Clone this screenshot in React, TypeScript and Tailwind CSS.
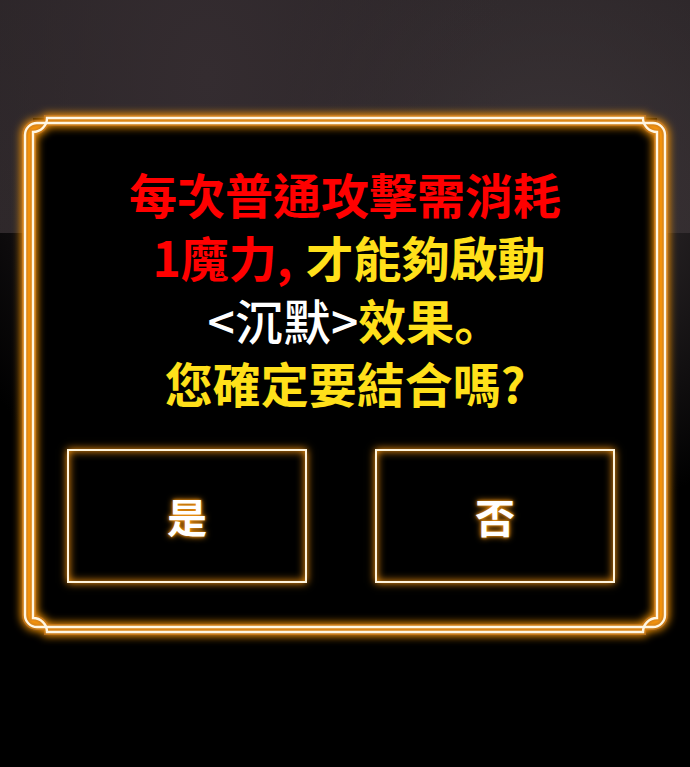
import React from "react";

const FONT = "font-['Noto_Sans_CJK_TC','Noto_Sans_CJK_SC',sans-serif]";

// outer line: concave corners, inner line: rounded corners, offset by the frame's origin (24,117)
const LINE_A =
  "M23,1 H619 A14,14 0 0,0 633,15 V501 A14,14 0 0,0 619,515 H23 A14,14 0 0,0 9,501 V15 A14,14 0 0,0 23,1 Z";
const LINE_B =
  "M13,6 H629 A12,12 0 0,1 641,18 V498 A12,12 0 0,1 629,510 H13 A12,12 0 0,1 1,498 V18 A12,12 0 0,1 13,6 Z";

function FrameLines() {
  return (
    <svg
      className="absolute inset-0 overflow-visible pointer-events-none"
      width={642}
      height={516}
      viewBox="0 0 642 516"
    >
      <defs>
        <filter id="glow" x="-10%" y="-10%" width="120%" height="120%">
          <feGaussianBlur stdDeviation="4.5" />
        </filter>
      </defs>
      <g filter="url(#glow)" fill="none" stroke="#ff9a10" strokeWidth={8}>
        <path d={LINE_A} />
        <path d={LINE_B} />
      </g>
      <g fill="none" stroke="#d9861f" strokeWidth={6} opacity={0.6}>
        <path d={LINE_A} />
        <path d={LINE_B} />
      </g>
      <g fill="none" stroke="#fff6e2" strokeWidth={2.4}>
        <path d={LINE_A} />
        <path d={LINE_B} />
      </g>
    </svg>
  );
}

function ChoiceButton({ label }: { label: string }) {
  return (
    <button className="flex h-[134px] w-[240px] items-center justify-center border-2 border-[#fff4dc] bg-black shadow-[0_0_8px_#ff9a10,inset_0_0_8px_#ff9a10]">
      <span className="text-[40px] leading-none font-bold text-white [text-shadow:0_0_6px_#ff9a10,0_0_3px_#ff9a10]">
        {label}
      </span>
    </button>
  );
}

export default function App() {
  return (
    <div
      className={`min-h-[767px] w-full pt-[117px] ${FONT} bg-[radial-gradient(ellipse_at_30%_10%,#342c30_0%,transparent_45%),radial-gradient(ellipse_at_80%_25%,#3a3336_0%,transparent_40%),linear-gradient(to_bottom,#2a2427_0px,#2d2729_233px,#000_233px)]`}
    >
      <div className="relative mx-auto h-[516px] w-[642px]">
        <div className="absolute top-[6px] right-[1px] bottom-[6px] left-[1px] rounded-[12px] bg-black" />
        <div className="absolute top-[1px] right-[9px] bottom-[1px] left-[9px] bg-black" />
        <FrameLines />
        <div className="relative flex flex-col items-center pt-[45px]">
          <div className="text-center text-[48px] leading-[63px] font-bold">
            <p className="text-[#ff0000]">每次普通攻擊需消耗</p>
            <p className="pl-[8px]">
              <span className="text-[#ff0000]">1魔力,</span>
              <span className="ml-[13px] text-[#ffe01a]">才能夠啟動</span>
            </p>
            <p className="pl-[20px]">
              <span className="font-medium text-white">&lt;沉默&gt;</span>
              <span className="text-[#ffe01a]">
                效果
                <span className="font-['Noto_Sans_CJK_SC',sans-serif]">。</span>
              </span>
            </p>
            <p className="text-[#ffe01a]">您確定要結合嗎?</p>
          </div>
          <div className="mt-[35px] flex gap-[68px] pr-[8px]">
            <ChoiceButton label="是" />
            <ChoiceButton label="否" />
          </div>
        </div>
      </div>
    </div>
  );
}
